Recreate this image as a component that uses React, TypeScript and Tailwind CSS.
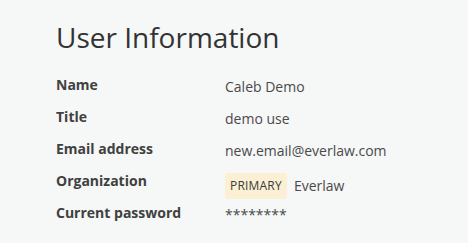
import React from "react";

const rows: [string, React.ReactNode][] = [
  ["Name", "Caleb Demo"],
  ["Title", "demo use"],
  ["Email address", "new.email@everlaw.com"],
  [
    "Organization",
    <span className="flex items-center">
      <span className="rounded-[3px] bg-[#fbf0d3] px-[5px] h-[26px] leading-[26px] text-[12px] text-[#3a3a3a] tracking-[0.2px]">PRIMARY</span>
      <span className="ml-[7px]">Everlaw</span>
    </span>,
  ],
  ["Current password", "********"],
];

export default function App() {
  return (
    <div className="w-[468px] h-[243px] bg-[#f6f7f7] pl-[56px] pt-[18px]" style={{ fontFamily: '"Open Sans", sans-serif' }}>
      <h1 className="text-[28px] leading-[38px] text-[#333333]">User Information</h1>
      <div className="mt-[19px] flex flex-col">
        {rows.map(([label, value]) => (
          <div key={label} className="flex h-[32px]">
            <div className="w-[169px] text-[14px] font-bold text-[#404040] leading-[20px]">{label}</div>
            <div className="text-[14px] text-[#4a4a4a] leading-[20px] pt-[2px]">{value}</div>
          </div>
        ))}
      </div>
    </div>
  );
}
